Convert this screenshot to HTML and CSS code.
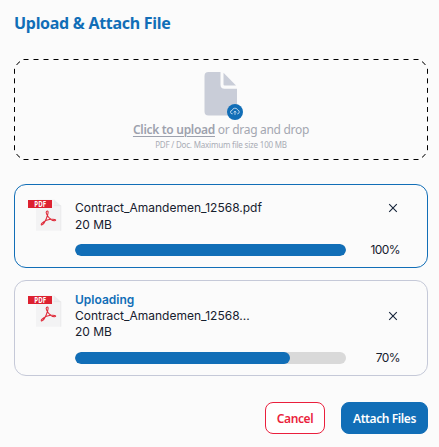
FILE: index.html
```html
<!DOCTYPE html>
<html lang="en">
<head>
<meta charset="utf-8">
<title>Upload &amp; Attach File</title>
<link rel="stylesheet" href="styles.css">
</head>
<body>
<main class="panel">
  <h1 class="title">Upload &amp; Attach File</h1>
  <section class="dropzone">
    <svg class="outline" viewBox="0 0 414 102" aria-hidden="true">
      <g fill="none" stroke="#000" stroke-width="1">
        <path d="M9.500 .5H404.500M9.500 100.500H404.500" stroke-dasharray="5 5"/>
        <path d="M.5 9.800V91.200M413.500 9.800V91.200" stroke-dasharray="5 4.550"/>
        <path d="M2.600 6Q3.800 4 6 2.600M411.400 6Q410.200 4 408 2.600M2.600 95Q3.800 97 6 98.400M411.400 95Q410.200 97 408 98.400"/>
      </g>
    </svg>
    <svg class="file-icon" viewBox="0 0 40 50" aria-hidden="true">
      <path d="M4.500 1H16.500V13.700a4 4 0 0 0 4 4H33V40.500a4 4 0 0 1-4 4H4.500a4 4 0 0 1-4-4V5a4 4 0 0 1 4-4z" fill="#c9cdd8"/>
      <path d="M19.500 1.700L32 14.600H20.500a1 1 0 0 1-1-1z" fill="#c9cdd8"/>
      <circle cx="31" cy="41" r="8" fill="#116eb7"/>
      <path d="M28.800 42.800h-.5a1.700 1.700 0 0 1-.2-3.400 3 3 0 0 1 5.700-.3 1.900 1.900 0 0 1 0 3.700h-.6M31 43.900v-3.600M29.600 41.500l1.400-1.300 1.400 1.300" fill="none" stroke="#d5e6f3" stroke-width=".8"/>
    </svg>
    <p class="prompt"><b>Click to upload</b> or drag and drop</p>
    <p class="hint">PDF / Doc. Maximum file size 100 MB</p>
  </section>
  <article class="card done">
    <svg class="pdf" viewBox="0 0 34 33"><use href="#pdf"/><text x="6.300" y="7.900" class="pdf-label" textLength="11.700" lengthAdjust="spacingAndGlyphs">PDF</text></svg>
    <div class="body">
      <div class="info">
        <div><p class="name">Contract_Amandemen_12568.pdf</p><p class="size">20 MB</p></div>
        <svg class="close"><use href="#close"/></svg>
      </div>
      <div class="progress"><div class="track"><div class="fill" style="width:100%"></div></div><span class="percent">100%</span></div>
    </div>
  </article>
  <article class="card active">
    <svg class="pdf" viewBox="0 0 34 33"><use href="#pdf"/><text x="6.300" y="7.900" class="pdf-label" textLength="11.700" lengthAdjust="spacingAndGlyphs">PDF</text></svg>
    <div class="body">
      <div class="info">
        <div><p class="status">Uploading</p><p class="name">Contract_Amandemen_12568...</p><p class="size">20 MB</p></div>
        <svg class="close"><use href="#close"/></svg>
      </div>
      <div class="progress"><div class="track"><div class="fill" style="width:79.400%"></div></div><span class="percent">70%</span></div>
    </div>
  </article>
  <footer class="actions">
    <button class="btn cancel">Cancel</button>
    <button class="btn attach">Attach Files</button>
  </footer>
</main>
<svg width="0" height="0" class="defs" aria-hidden="true">
  <symbol id="pdf" viewBox="0 0 34 33">
    <path d="M9 .5h17l7 6.500v24.800H8V1.500z" fill="#f3f3f4"/>
    <path d="M26 .5l7 6.500h-7z" fill="#ececee"/>
    <path d="M25.500 6.700h7.300v25" fill="none" stroke="#e4e4e6" stroke-width=".6"/>
    <path d="M0 1h24v8H0z" fill="#dd2130"/>
    <path d="M18.500 12.300c1.600-1.300 2 .8 1.200 3.200-1 3.600-3.300 8.700-5.300 10.200-1.100.8-1.700-.2-.6-1.400 2.200-2.400 7.200-4.100 11-4.100 3.200 0 3.600 1.400 1.800 1.600-2.300.2-6.300-3-7.700-6-.8-1.600-1-2.900-.4-3.500z" fill="none" stroke="#df2b3a" stroke-width="1.050" stroke-linejoin="round"/>
  </symbol>
  <symbol id="close" viewBox="0 0 10 10">
    <path d="M1.200 1.200l7.600 7.600M8.800 1.200l-7.600 7.600" fill="none" stroke="#16243a" stroke-width="1.100"/>
  </symbol>
</svg>
</body>
</html>
```
FILE: styles.css
```css
* { box-sizing: border-box; margin: 0; padding: 0; }
html, body { background: #fbfbfb; }
body { height: 447px; overflow: hidden; }
.defs { display: block; }
.panel { width: 439px; padding: 11px 11px 0 14px; }
.title { height: 24px; font: 700 16px/24px "Noto Sans", sans-serif; letter-spacing: -.29px; color: #116eb7; white-space: nowrap; }
.dropzone { position: relative; width: 414px; height: 102px; margin-top: 24px; display: flex; flex-direction: column; align-items: center; padding-top: 12px; }
.outline { position: absolute; left: 0; top: 0; width: 414px; height: 102px; }
.file-icon { width: 40px; height: 50px; margin-left: 5px; }
.prompt { height: 18px; font: 400 12px/18px "Noto Sans", sans-serif; letter-spacing: -.3px; color: #a4a7b1; white-space: nowrap; }
.prompt b { font-weight: 600; color: #9da1ad; text-decoration: underline; text-underline-offset: 2px; text-decoration-thickness: 1px; }
.hint { height: 12px; font: 400 8px/12px "Noto Sans", sans-serif; letter-spacing: -.2px; color: #a9acb5; white-space: nowrap; }
.card { width: 414px; border: 1px solid #c5c9d8; border-radius: 12px; display: flex; padding-left: 13px; }
.done { height: 84px; margin-top: 23px; border-color: #116eb7; }
.active { height: 96px; margin-top: 12px; }
.pdf { width: 34px; height: 33px; margin-top: 14px; flex: none; }
.pdf-label { font: 700 8px "Open Sans", sans-serif; fill: #fff; }
.body { flex: 1; margin-left: 13px; font: 400 12px/17px Inter, sans-serif; color: #16202e; white-space: nowrap; }
.info { display: flex; justify-content: space-between; }
.done .info { height: 59px; padding-top: 14px; }
.active .info { height: 71px; padding-top: 11px; line-height: 16px; }
.close { width: 10px; height: 10px; margin-right: 29px; }
.done .close { margin-top: 4px; }
.active .close { margin-top: 19px; }
.status { font-weight: 600; color: #116eb7; }
.progress { display: flex; align-items: center; height: 12px; padding-right: 27px; }
.track { width: 271px; height: 12px; border-radius: 6px; background: #d9d9d9; overflow: hidden; }
.fill { height: 100%; border-radius: 6px; background: #116eb7; }
.percent { margin-left: auto; padding-bottom: 2px; letter-spacing: -.6px; }
.actions { display: flex; justify-content: flex-end; gap: 16px; width: 414px; margin-top: 26px; }
.btn { height: 32px; border-radius: 8px; font: 600 12px/32px "Noto Sans", sans-serif; letter-spacing: -.4px; white-space: nowrap; }
.cancel { width: 60px; border: 1px solid #ea1f3d; color: #ea1f3d; background: #fff; }
.attach { width: 87px; border: 1px solid #116eb7; color: #fff; background: #116eb7; }
```
